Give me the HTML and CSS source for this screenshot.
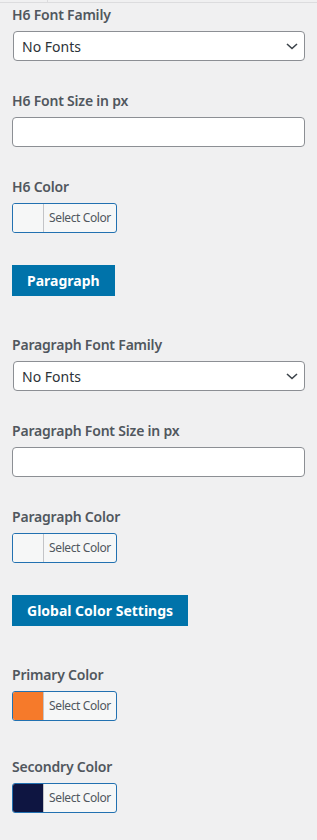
FILE: index.html
```html
<!DOCTYPE html>
<html lang="en">
<head>
    <meta charset="UTF-8">
    <meta name="viewport" content="width=device-width, initial-scale=1.0">
    <title>Typography Settings</title>
    <link rel="stylesheet" href="styles.css">
</head>
<body>

    <!-- restos do painel de cima -->
    <div class="top-edge">
        <div class="top-edge-cell"></div>
        <div class="top-edge-rest"></div>
    </div>

    <div class="painel">

        <div class="campo">
            <label class="campo-titulo" for="h6Family">H6 Font Family</label>
            <div class="select-wrap">
                <select id="h6Family">
                    <option>No Fonts</option>
                </select>
                <svg class="seta" width="12" height="7" viewBox="0 0 12 7"><path d="M1 1l5 4.5L11 1" fill="none" stroke="#3c434a" stroke-width="1.6"/></svg>
            </div>
        </div>

        <div class="campo">
            <label class="campo-titulo" for="h6Size">H6 Font Size in px</label>
            <input type="text" id="h6Size" class="texto">
        </div>

        <div class="campo campo-cor">
            <span class="campo-titulo">H6 Color</span>
            <button class="btn-cor"><span class="amostra"></span><span class="btn-cor-texto">Select Color</span></button>
        </div>

        <div class="secao"><button class="btn-secao">Paragraph</button></div>

        <div class="campo">
            <label class="campo-titulo" for="pFamily">Paragraph Font Family</label>
            <div class="select-wrap">
                <select id="pFamily">
                    <option>No Fonts</option>
                </select>
                <svg class="seta" width="12" height="7" viewBox="0 0 12 7"><path d="M1 1l5 4.5L11 1" fill="none" stroke="#3c434a" stroke-width="1.6"/></svg>
            </div>
        </div>

        <div class="campo">
            <label class="campo-titulo" for="pSize">Paragraph Font Size in px</label>
            <input type="text" id="pSize" class="texto">
        </div>

        <div class="campo campo-cor">
            <span class="campo-titulo">Paragraph Color</span>
            <button class="btn-cor"><span class="amostra"></span><span class="btn-cor-texto">Select Color</span></button>
        </div>

        <div class="secao"><button class="btn-secao">Global Color Settings</button></div>

        <div class="campo campo-cor">
            <span class="campo-titulo">Primary Color</span>
            <button class="btn-cor"><span class="amostra amostra-laranja"></span><span class="btn-cor-texto">Select Color</span></button>
        </div>

        <div class="campo campo-cor">
            <span class="campo-titulo">Secondry Color</span>
            <button class="btn-cor"><span class="amostra amostra-azul"></span><span class="btn-cor-texto">Select Color</span></button>
        </div>

    </div>

</body>
</html>
```

FILE: styles.css
```css
* {
    margin: 0;
    padding: 0;
    box-sizing: border-box;
}

body {
    font-family: 'Noto Sans', 'Open Sans', sans-serif;
    background-color: #f0f0f1;
    color: #50575e;
}

.top-edge {
    display: flex;
    height: 3px;
    border-bottom: 1px solid #dcdcde;
}

.top-edge-cell {
    width: 48px;
    border-right: 1px solid #dcdcde;
}

.painel {
    padding: 2px 12px 20px 12px;
}

.campo {
    margin-bottom: 30px;
}

.campo-cor {
    margin-bottom: 32px;
}

/* margens colapsam, entao o valor maior vale */
.campo-cor + .campo-cor {
    margin-top: 36px;
}

.campo-titulo {
    display: block;
    font-size: 14px;
    line-height: 20px;
    font-weight: 600;
    letter-spacing: -0.2px;
    color: #50575e;
    margin-bottom: 6px;
}

.select-wrap {
    position: relative;
    margin-left: 1px;
}

.select-wrap select {
    width: 100%;
    height: 30px;
    padding: 0 24px 0 8px;
    font-family: inherit;
    font-size: 14px;
    color: #2c3338;
    background-color: #fff;
    border: 1px solid #8c8f94;
    border-radius: 4px;
    appearance: none;
    -webkit-appearance: none;
}

.seta {
    position: absolute;
    right: 7px;
    top: 12px;
}

.texto {
    display: block;
    width: 100%;
    height: 30px;
    background-color: #fff;
    border: 1px solid #8c8f94;
    border-radius: 4px;
}

.btn-cor {
    display: flex;
    width: 105px;
    height: 30px;
    background-color: #f6f7f7;
    border: 1px solid #2271b1;
    border-radius: 3px;
    overflow: hidden;
    font-family: inherit;
    cursor: pointer;
}

.amostra {
    width: 31px;
    height: 100%;
    background-color: #f6f7f7;
    border-right: 1px solid #c3c4c7;
}

.amostra-laranja {
    background-color: #f67a2a;
}

.amostra-azul {
    background-color: #0e1541;
}

.btn-cor-texto {
    flex: 1;
    font-size: 12px;
    line-height: 28px;
    letter-spacing: -0.4px;
    color: #50575e;
    text-align: center;
}

.secao {
    margin-bottom: 39px;
}

.btn-secao {
    height: 31px;
    padding: 0 15px;
    background-color: #0073aa;
    color: #fff;
    border: none;
    font-family: inherit;
    font-size: 14px;
    font-weight: 700;
    cursor: pointer;
}
```
